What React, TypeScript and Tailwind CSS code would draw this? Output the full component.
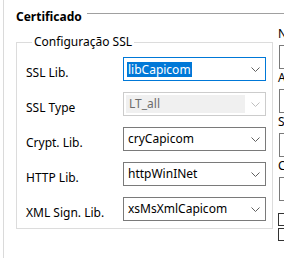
import React from "react";

function Chevron({ color = "#5f5f5f" }: { color?: string }) {
  return (
    <svg width="9" height="5" viewBox="0 0 9 5" className="shrink-0">
      <path d="M0.5 0.5 L4.5 4.5 L8.5 0.5" fill="none" stroke={color} strokeWidth="1" />
    </svg>
  );
}

function Combo({ value, state }: { value: string; state: "focus" | "normal" | "disabled" }) {
  if (state === "disabled") {
    return (
      <div className="h-[24px] w-[143px] border border-[#cccccc] bg-white flex items-center pr-[5px]">
        <div className="ml-[2px] h-[18px] w-[119px] bg-[#f0f0f0] flex items-center pl-[3px] text-[#6d6d6d]">
          {value}
        </div>
        <div className="flex-1" />
        <Chevron color="#bfbfbf" />
      </div>
    );
  }
  return (
    <div
      className={
        state === "focus"
          ? "h-[24px] w-[143px] border border-[#0078d7] bg-white flex items-center pl-[3px] pr-[5px]"
          : "h-[24px] w-[143px] border border-[#7a7a7a] bg-white flex items-center pl-[4px] pr-[5px]"
      }
    >
      {state === "focus" ? (
        <span className="bg-[#0078d7] text-white px-[1px] leading-[15px]">{value}</span>
      ) : (
        <span>{value}</span>
      )}
      <div className="flex-1" />
      <Chevron />
    </div>
  );
}

const rows: { label: string; value: string; state: "focus" | "normal" | "disabled" }[] = [
  { label: "SSL Lib.", value: "libCapicom", state: "focus" },
  { label: "SSL Type", value: "LT_all", state: "disabled" },
  { label: "Crypt. Lib.", value: "cryCapicom", state: "normal" },
  { label: "HTTP Lib.", value: "httpWinINet", state: "normal" },
  { label: "XML Sign. Lib.", value: "xsMsXmlCapicom", state: "normal" },
];

const side = ["Nome", "Arquivo", "Senha", "CNPJ"];

export default function App() {
  return (
    <div className="w-[284px] h-[258px] overflow-hidden bg-white flex font-['Noto_Sans',sans-serif] text-[12px] leading-[16px] text-black">
      <div className="w-[3px] shrink-0" />
      <div className="w-[1px] shrink-0 bg-[#dadada]" />
      <div className="flex-1 flex flex-col min-w-0 pl-[12px] pt-[9px]">
        <div className="flex items-start">
          <span className="font-bold">Certificado</span>
          <div className="flex-1 border-t border-[#a0a0a0] mt-[4px] ml-[5px]" />
        </div>
        <div className="flex items-start gap-[5px]">
          <fieldset className="mt-[9px] w-[257px] shrink-0 border border-[#dcdcdc] pl-[9px] pr-[6px] pt-[7px] pb-[7px] m-0">
            <legend className="ml-[6px] px-[2px]">Configuração SSL</legend>
            <div className="grid grid-cols-[97px_143px] gap-y-[11px]">
              {rows.map((r) => (
                <React.Fragment key={r.label}>
                  <div className="pt-[8px] whitespace-nowrap">{r.label}</div>
                  <Combo value={r.value} state={r.state} />
                </React.Fragment>
              ))}
            </div>
          </fieldset>
          <div className="flex flex-col pt-[1px] shrink-0 w-[40px]">
            {side.map((s) => (
              <div key={s} className="flex flex-col mb-[1px]">
                <div className="whitespace-nowrap">{s}</div>
                <div className="mt-[3px] h-[24px] border border-[#7a7a7a] ml-[1px]" />
              </div>
            ))}
            <div className="mt-[11px] w-[13px] h-[13px] border border-[#333333]" />
            <div className="mt-[2px] w-[13px] h-[13px] border border-[#333333]" />
          </div>
        </div>
      </div>
    </div>
  );
}
